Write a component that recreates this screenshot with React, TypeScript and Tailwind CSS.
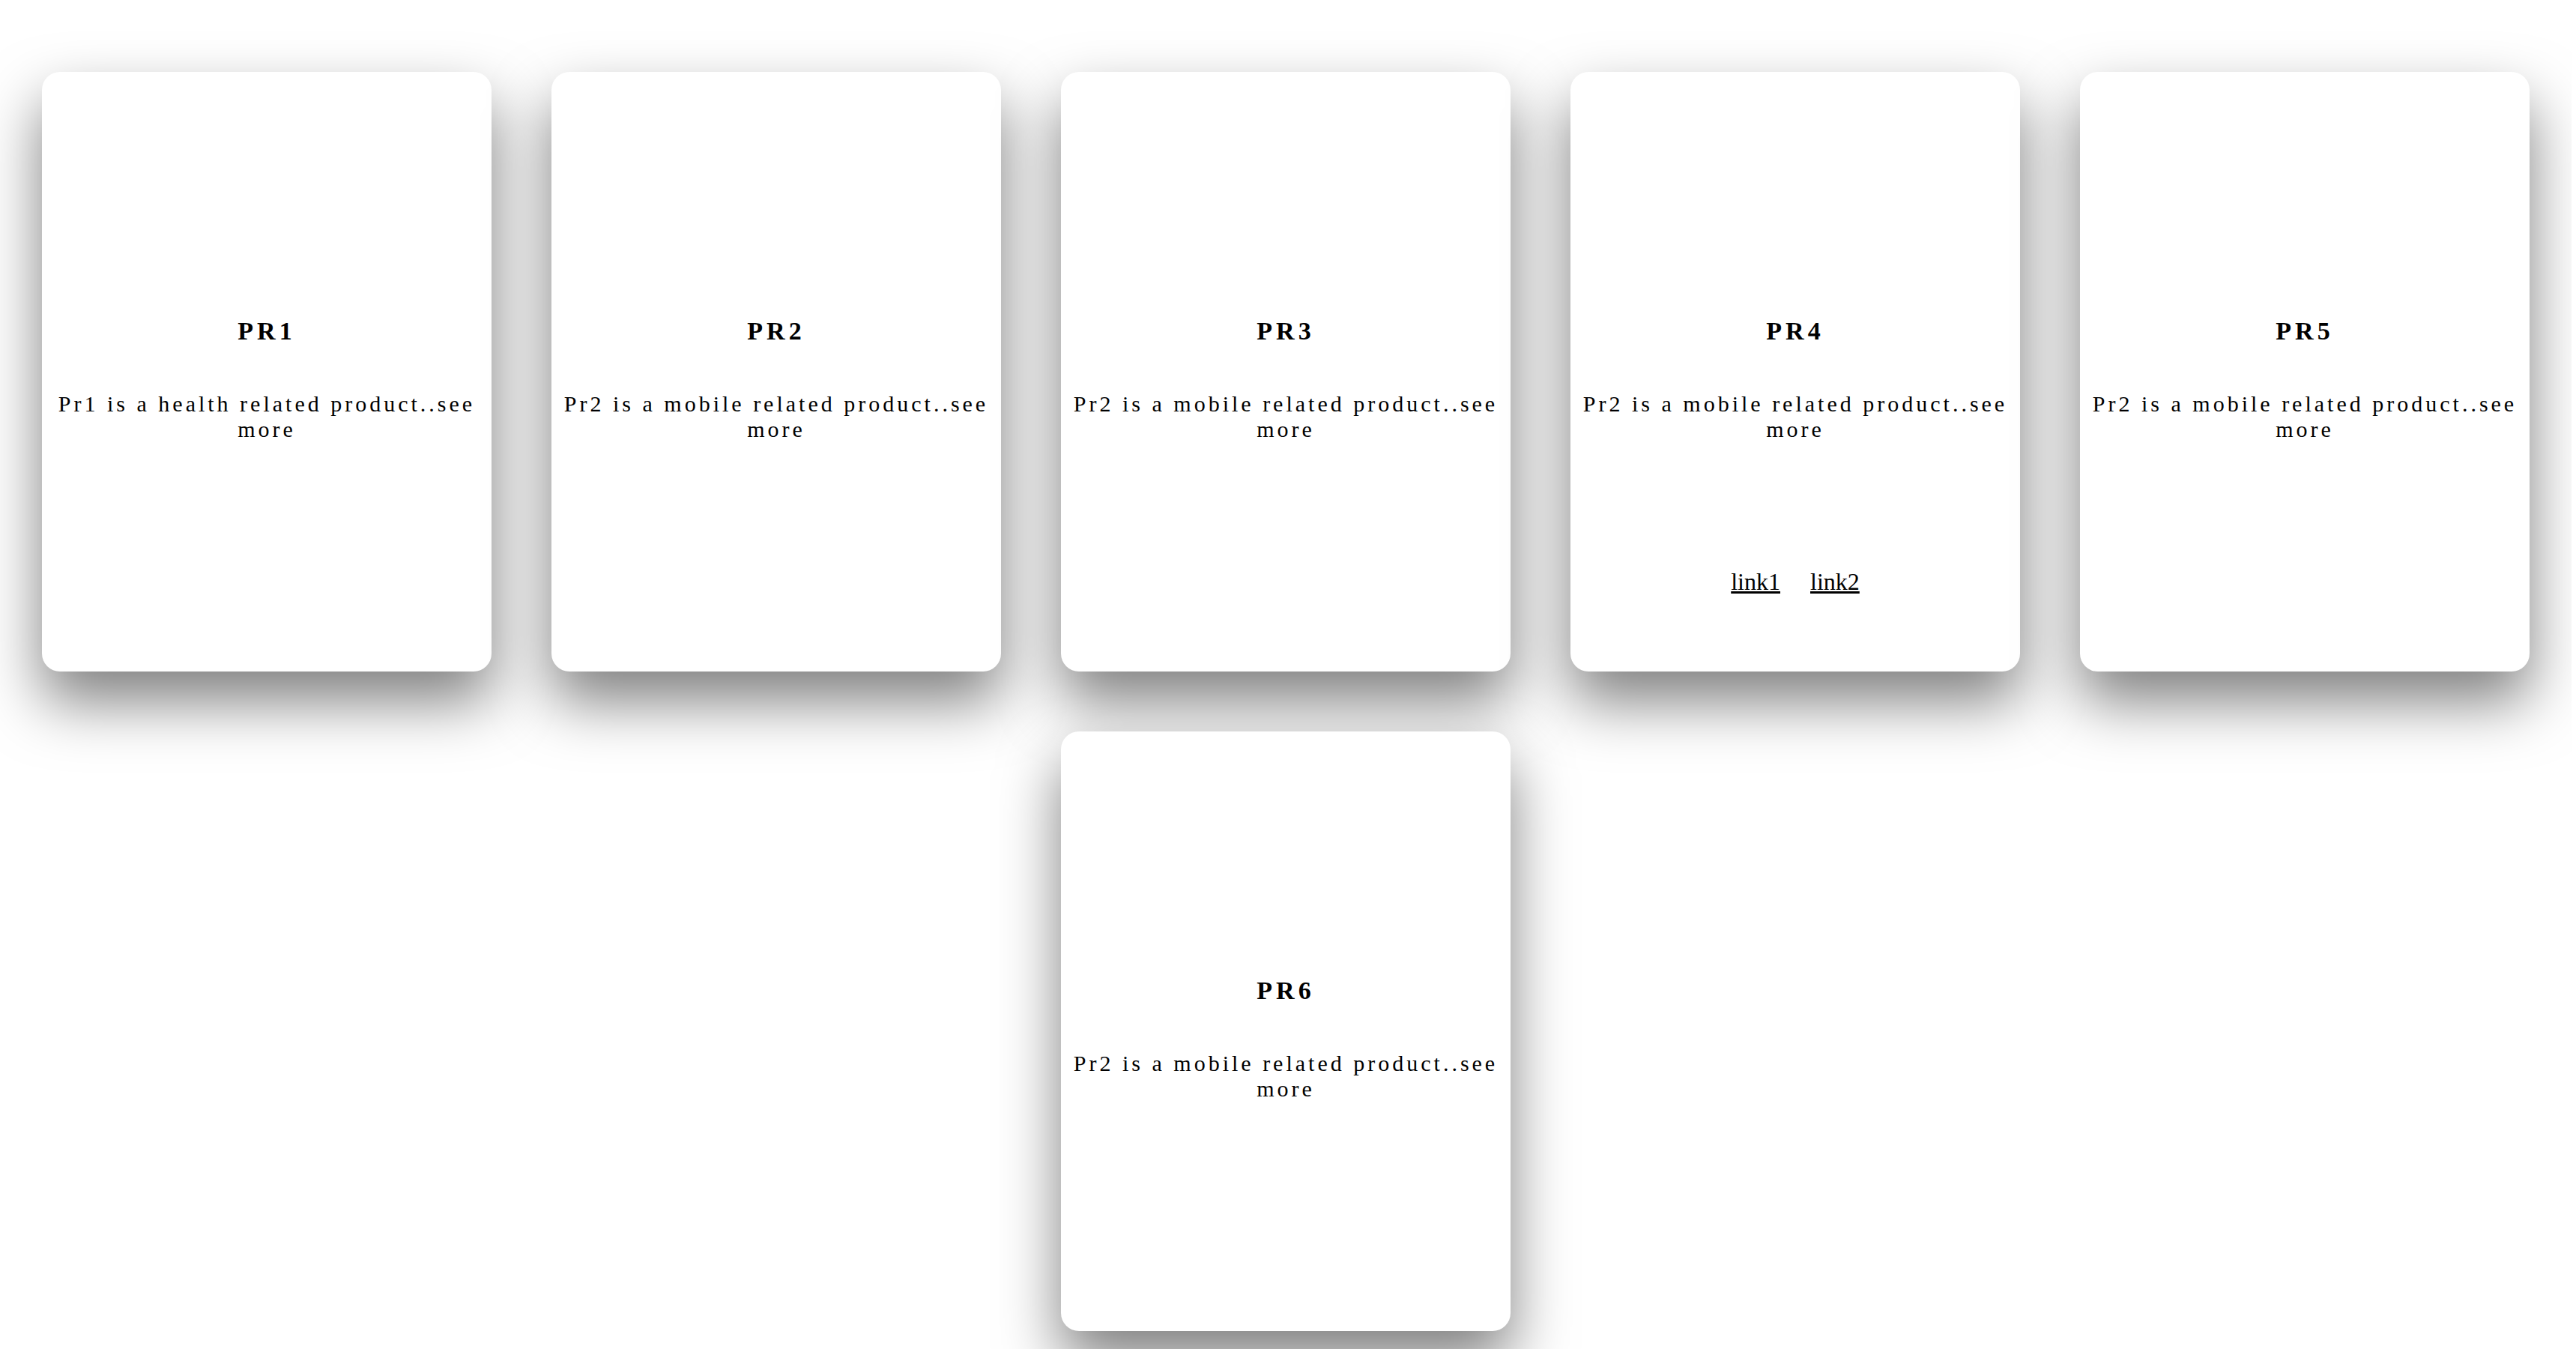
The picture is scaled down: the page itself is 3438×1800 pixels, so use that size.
const products = [
  { id: 1, title: "PR1", text: "Pr1 is a health related product..see more" },
  { id: 2, title: "PR2", text: "Pr2 is a mobile related product..see more" },
  { id: 3, title: "PR3", text: "Pr2 is a mobile related product..see more" },
  { id: 4, title: "PR4", text: "Pr2 is a mobile related product..see more", links: ["link1", "link2"] },
  { id: 5, title: "PR5", text: "Pr2 is a mobile related product..see more" },
  { id: 6, title: "PR6", text: "Pr2 is a mobile related product..see more" },
];

interface Product {
  id: number;
  title: string;
  text: string;
  links?: string[];
}

function ProductCard({ product }: { product: Product }) {
  return (
    <div className="w-[600px] h-[800px] bg-white rounded-[24px] shadow-[0_40px_80px_rgba(0,0,0,0.5)] flex flex-col items-center pt-[327px] px-[10px] text-black text-center">
      <h2 className="text-[34px] leading-[37px] font-bold tracking-[5px]">
        {product.title}
      </h2>
      <p className="mt-[62px] text-[30px] leading-[34px] tracking-[4px]">
        {product.text}
      </p>
      {product.links && (
        <div className="mt-[168px] flex gap-[40px] text-[32px] leading-[37px]">
          {product.links.map((l) => (
            <a key={l} href="#" className="underline text-black">
              {l}
            </a>
          ))}
        </div>
      )}
    </div>
  );
}

export default function App() {
  return (
    <div className="w-[3432px] h-[1800px] overflow-hidden bg-white font-['Liberation_Serif','Times_New_Roman',serif]">
      <div className="flex flex-wrap justify-center gap-x-[80px] gap-y-[80px] pt-[96px]">
        {products.map((p) => (
          <ProductCard key={p.id} product={p} />
        ))}
      </div>
    </div>
  );
}
